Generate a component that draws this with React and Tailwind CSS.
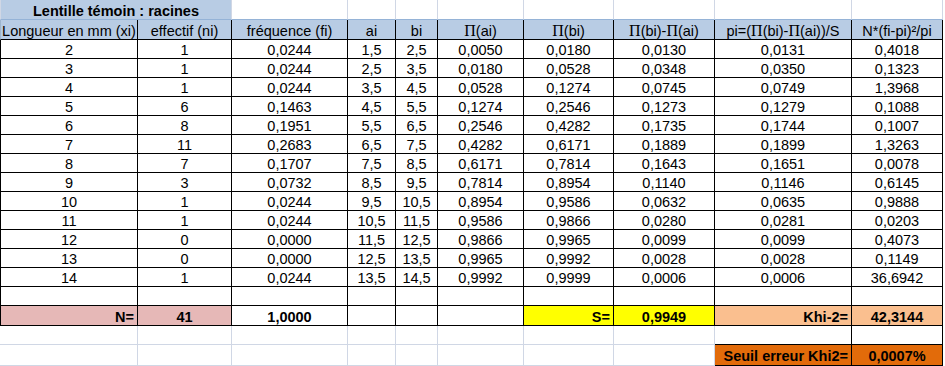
import React from "react";

const COLS = [138, 94, 116, 48, 42, 86, 90, 101, 137, 91];
const GRID = "border-[#d0d7e5]";
const BLACK = "border-black";

const data = [
  ["2", "1", "0,0244", "1,5", "2,5", "0,0050", "0,0180", "0,0130", "0,0131", "0,4018"],
  ["3", "1", "0,0244", "2,5", "3,5", "0,0180", "0,0528", "0,0348", "0,0350", "0,1323"],
  ["4", "1", "0,0244", "3,5", "4,5", "0,0528", "0,1274", "0,0745", "0,0749", "1,3968"],
  ["5", "6", "0,1463", "4,5", "5,5", "0,1274", "0,2546", "0,1273", "0,1279", "0,1088"],
  ["6", "8", "0,1951", "5,5", "6,5", "0,2546", "0,4282", "0,1735", "0,1744", "0,1007"],
  ["7", "11", "0,2683", "6,5", "7,5", "0,4282", "0,6171", "0,1889", "0,1899", "1,3263"],
  ["8", "7", "0,1707", "7,5", "8,5", "0,6171", "0,7814", "0,1643", "0,1651", "0,0078"],
  ["9", "3", "0,0732", "8,5", "9,5", "0,7814", "0,8954", "0,1140", "0,1146", "0,6145"],
  ["10", "1", "0,0244", "9,5", "10,5", "0,8954", "0,9586", "0,0632", "0,0635", "0,9888"],
  ["11", "1", "0,0244", "10,5", "11,5", "0,9586", "0,9866", "0,0280", "0,0281", "0,0203"],
  ["12", "0", "0,0000", "11,5", "12,5", "0,9866", "0,9965", "0,0099", "0,0099", "0,4073"],
  ["13", "0", "0,0000", "12,5", "13,5", "0,9965", "0,9992", "0,0028", "0,0028", "0,1149"],
  ["14", "1", "0,0244", "13,5", "14,5", "0,9992", "0,9999", "0,0006", "0,0006", "36,6942"],
];

// Greek capital pi, drawn in a serif face like the sheet
const Pi = () => <span className="font-['Liberation_Serif',serif] text-[16px]">Π</span>;

const Cell = ({ w, h, border = BLACK, bg = "bg-white", align = "justify-center", bold, first, children }) => (
  <div
    className={`flex items-center shrink-0 border-r border-b ${first ? "border-l" : ""} ${border} ${bg} ${align} ${bold ? "font-bold" : ""} px-[3px] pt-[3px] whitespace-nowrap overflow-hidden`}
    style={{ width: w, height: h }}
  >
    {children}
  </div>
);

const Row = ({ children }) => <div className="flex">{children}</div>;

export default function App() {
  const h = 19;
  return (
    <div className="w-[945px] h-[366px] bg-white overflow-hidden font-['Liberation_Sans',Arial,sans-serif] text-[14.5px] text-black leading-none">
      {/* title row */}
      <Row>
        <Cell w={COLS[0] + COLS[1]} h={20} border="border-[#d0d7e5] border-b-[#95b3d7]" bg="bg-[#b8cce4]" bold first>
          Lentille témoin : racines
        </Cell>
        {COLS.slice(2).map((w, i) => (
          <Cell key={i} w={w} h={20} border="border-[#d0d7e5] border-b-[#95b3d7]" />
        ))}
      </Row>

      {/* header row */}
      <Row>
        {[
          "Longueur en mm (xi)",
          "effectif (ni)",
          "fréquence (fi)",
          "ai",
          "bi",
          <><Pi />(ai)</>,
          <><Pi />(bi)</>,
          <><Pi />(bi)-<Pi />(ai)</>,
          <>pi=(<Pi />(bi)-<Pi />(ai))/S</>,
          "N*(fi-pi)²/pi",
        ].map((t, i) => (
          <Cell key={i} w={COLS[i]} h={20} bg="bg-[#b8cce4]" first={i === 0} border={i === 0 ? "border-black border-l-[#9eb6ce]" : BLACK}>
            {t}
          </Cell>
        ))}
      </Row>

      {/* data rows */}
      {data.map((r, ri) => (
        <Row key={ri}>
          {r.map((t, i) => (
            <Cell key={i} w={COLS[i]} h={h} first={i === 0}>
              {t}
            </Cell>
          ))}
        </Row>
      ))}

      {/* blank bordered row */}
      <Row>
        {COLS.map((w, i) => (
          <Cell key={i} w={w} h={h} first={i === 0} />
        ))}
      </Row>

      {/* totals row */}
      <Row>
        <Cell w={COLS[0]} h={20} bg="bg-[#e6b8b7]" align="justify-end" bold first>N=</Cell>
        <Cell w={COLS[1]} h={20} bg="bg-[#e6b8b7]" bold>41</Cell>
        <Cell w={COLS[2]} h={20} bold>1,0000</Cell>
        <Cell w={COLS[3]} h={20} />
        <Cell w={COLS[4]} h={20} />
        <Cell w={COLS[5]} h={20} />
        <Cell w={COLS[6]} h={20} bg="bg-[#ffff00]" align="justify-end" bold>S=</Cell>
        <Cell w={COLS[7]} h={20} bg="bg-[#ffff00]" bold>0,9949</Cell>
        <Cell w={COLS[8]} h={20} bg="bg-[#fabf8f]" align="justify-end" bold>Khi-2=</Cell>
        <Cell w={COLS[9]} h={20} bg="bg-[#fabf8f]" bold>42,3144</Cell>
      </Row>

      {/* blank row */}
      <Row>
        {COLS.map((w, i) => (
          <Cell key={i} w={w} h={h} border={i >= 8 ? BLACK : GRID} />
        ))}
      </Row>

      {/* seuil row */}
      <Row>
        {COLS.slice(0, 8).map((w, i) => (
          <Cell key={i} w={w} h={21} border={GRID} />
        ))}
        <Cell w={COLS[8]} h={21} bg="bg-[#e26b0a]" align="justify-end" bold>Seuil erreur Khi2=</Cell>
        <Cell w={COLS[9]} h={21} bg="bg-[#e26b0a]" bold>0,0007%</Cell>
      </Row>
    </div>
  );
}
